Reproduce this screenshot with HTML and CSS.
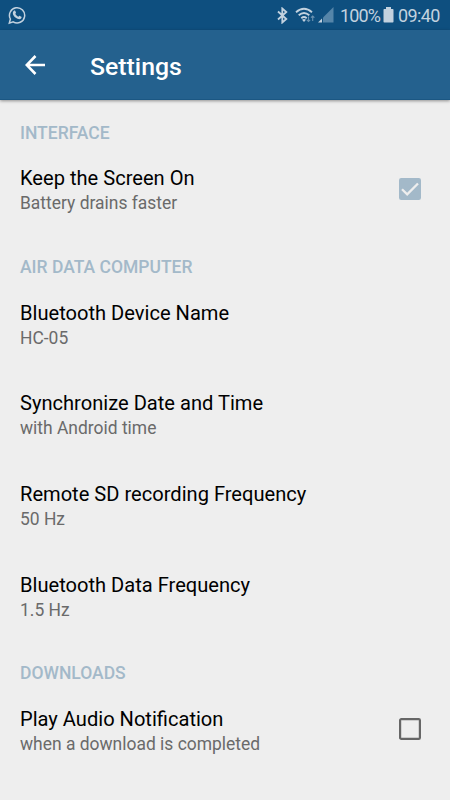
FILE: index.html
```html
<!DOCTYPE html>
<html lang="en">
<head>
<meta charset="utf-8">
<title>Settings</title>
<link rel="stylesheet" href="styles.css">
</head>
<body>
<div class="status">
  <svg class="whatsapp" width="18" height="19" viewBox="0 0 18 19" fill="none" stroke="#c3d2df"><path stroke-width="1.5" d="M1.3 17.2 2.4 13A7.6 7.6 0 1 1 5.2 15.9Z"/><path fill="#c3d2df" stroke="none" d="M5.9 4.8c.6-.5 1.1-.5 1.4.1l.7 1.6c.1.5-.5.9-.7 1.3.7 1.5 1.7 2.4 3.1 3 .5-.3.9-1.1 1.4-.9l1.6.9c.5.3 0 1.4-.6 1.9-1.3 1-3.4.3-5-.9-1.5-1.2-3-3-3-4.9 0-.9.4-1.6 1.1-2.1z"/></svg>
  <div class="indicators">
    <svg class="bluetooth" width="11" height="17" viewBox="0 0 11 17" fill="none" stroke="#c3d2df" stroke-width="1.8"><path d="M1 4.5 9.3 12 5.3 15.500V1.5L9.3 5 1 12.5"/></svg>
    <svg class="wifi" width="21" height="17" viewBox="0 0 21 17" fill="none" stroke="#c3d2df" stroke-width="1.8"><path d="M1 5.2Q9 -1.8 17 5.2M3.700 8.3Q9 3.7 14.3 8.3M6.300 11.2Q9 8.9 11.7 11.2"/><path fill="#c3d2df" stroke="none" d="m9 15-2-2.300q2-1.5 4 0z"/><path stroke="#6a92b1" stroke-width="1.1" d="M13.5 9.500v5m-1.700-1.700 1.700 1.700 1.700-1.700M17.700 14V9m-1.700 1.700L17.700 9l1.700 1.700"/></svg>
    <svg class="signal" width="16" height="16" viewBox="0 0 16 16"><path fill="#5585a9" d="M15.5 0v15.500H5V10.500z"/><path fill="#c3d2df" d="M0 15.500 4 11.500v4z"/></svg>
    <span class="percent">100%</span>
    <svg class="battery" width="11" height="16" viewBox="0 0 11 16"><path fill="#c3d2df" d="M3 0h5v2h1.700q.8 0 .8.8v11.900q0 .8-.8.8H1.300q-.8 0-.8-.8V2.800q0-.8.8-.8H3z"/></svg>
    <span class="clock">09:40</span>
  </div>
</div>
<header class="appbar">
  <svg class="back" width="20" height="20" viewBox="0 0 20 20" fill="none" stroke="#fff" stroke-width="2.6"><path d="M20 10H2M10.500 1 1.700 10l8.800 9"/></svg>
  <h1>Settings</h1>
</header>
<main>
  <h2>INTERFACE</h2>
  <div class="row">
    <div><div class="title">Keep the Screen On</div><div class="summary">Battery drains faster</div></div>
    <svg class="check" width="24" height="24" viewBox="0 0 24 24"><rect x="1" y="1" width="22" height="22" rx="2.2" fill="#a3b9c9"/><path d="m4 12.200 5.200 5.100L20 6.500" fill="none" stroke="#eee" stroke-width="2.3"/></svg>
  </div>
  <h2>AIR DATA COMPUTER</h2>
  <div class="row"><div><div class="title">Bluetooth Device Name</div><div class="summary">HC-05</div></div></div>
  <div class="row"><div><div class="title">Synchronize Date and Time</div><div class="summary">with Android time</div></div></div>
  <div class="row"><div><div class="title">Remote SD recording Frequency</div><div class="summary">50 Hz</div></div></div>
  <div class="row"><div><div class="title">Bluetooth Data Frequency</div><div class="summary">1.5 Hz</div></div></div>
  <h2>DOWNLOADS</h2>
  <div class="row">
    <div><div class="title">Play Audio Notification</div><div class="summary">when a download is completed</div></div>
    <svg class="check" width="24" height="24" viewBox="0 0 24 24"><rect x="2.1" y="2.1" width="19.8" height="19.8" rx="1.2" fill="none" stroke="#666" stroke-width="2.2"/></svg>
  </div>
</main>
</body>
</html>
```
FILE: styles.css
```css
* { box-sizing: border-box; }
body {
  margin: 0;
  height: 800px;
  overflow: hidden;
  background: #eee;
  font-family: Roboto, "Liberation Sans", sans-serif;
}
svg { display: block; flex: none; }
.status {
  height: 30px;
  padding: 0 10px 0 8px;
  display: flex;
  align-items: center;
  justify-content: space-between;
  background: #0e4f7f;
  color: #c3d2df;
}
.indicators { display: flex; align-items: center; font-size: 18px; line-height: 30px; }
.bluetooth { margin-right: 7px; }
.wifi { margin-right: 2px; }
.signal { margin-right: 5px; }
.percent { width: 40px; margin-right: 4px; letter-spacing: -.9px; padding-left: 1px; white-space: nowrap; }
.battery { margin-right: 4px; }
.clock { width: 42px; letter-spacing: -.6px; padding-top: 1px; white-space: nowrap; }
.percent { padding-top: 1px; }
.appbar {
  height: 70px;
  padding: 2px 25px 0;
  display: flex;
  align-items: center;
  gap: 45px;
  background: #24618e;
  border-bottom: 1px solid #1b5783;
  box-shadow: 0 1px 3px rgba(0, 0, 0, .4);
}
.back { margin-top: -2px; }
h1 { margin: 2px 0 0; font-size: 24.800px; line-height: 30px; font-weight: 500; color: #fff; }
main { padding-top: .7px; }
h2 {
  height: 43.800px;
  margin: 0;
  padding: 22px 20px 0;
  font-size: 17.500px;
  line-height: 21px;
  font-weight: 500;
  color: #a3b9c9;
}
.row {
  height: 90.600px;
  padding: 1.200px 28px 0 20px;
  display: flex;
  align-items: center;
  justify-content: space-between;
}
.check { margin-top: -3px; }
.title { font-size: 20.100px; line-height: 26px; color: #000; }
.summary { font-size: 17.450px; line-height: 24px; color: #6a6a6a; }
```
